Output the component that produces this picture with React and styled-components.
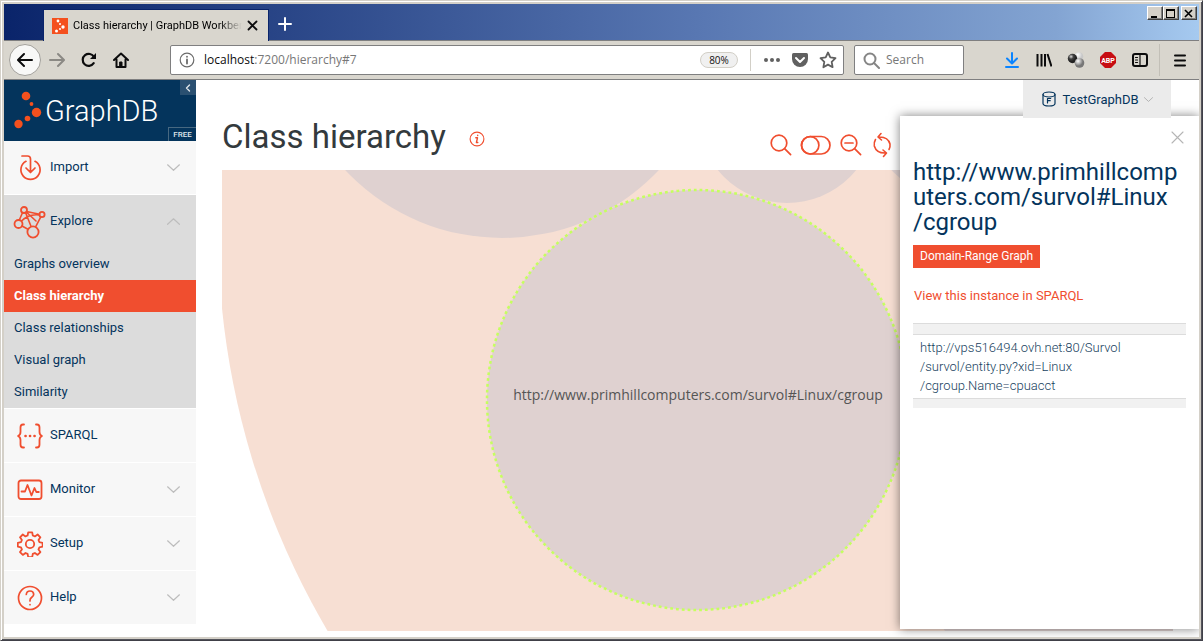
import React from "react";
import styled, { createGlobalStyle, css } from "styled-components";

const c = {
  orange: "#f04e2f",
  navy: "#04345c",
  chrome: "#d9d6ce",
  line: "#7f7f80",
  peach: "#f7dfd3",
  mauve: "#dfd1d0",
};
const ui = `Roboto, "Liberation Sans", sans-serif`;
const sys = `"Open Sans", "Noto Sans", sans-serif`;

const Global = createGlobalStyle`
  *, *::before, *::after { box-sizing: border-box; }
  body { margin: 0; background: ${c.chrome}; font-family: ${ui}; }
  button { font: inherit; color: inherit; background: none; border: 0; padding: 0; }
  a { color: inherit; text-decoration: none; }
  ul, h1, h2 { margin: 0; padding: 0; list-style: none; font-weight: 400; }
  svg { display: block; flex: none; }
`;

/* ---------- window frame ---------- */
const Window = styled.div`
  display: flex;
  flex-direction: column;
  min-height: 100vh;
  padding: 3px;
  background: #d4d0c8;
  border: 1px solid;
  border-color: #d4d0c8 #404048 #404048 #d4d0c8;
  box-shadow: inset 1px 1px #fff, inset -1px -1px #55555c;
`;
const TitleBar = styled.header`
  display: flex;
  height: 37px;
  padding-left: 39px;
  align-items: flex-end;
  border-bottom: 1px solid ${c.line};
  background: linear-gradient(90deg, #0a246a 0%, #5877b2 58%, #83a4d2 88%, #a6caf0 100%);
`;
const Tab = styled.div`
  display: flex;
  align-items: center;
  width: 226px;
  height: 32px;
  margin-bottom: -1px;
  padding: 0 10px 0 8px;
  gap: 5px;
  border: solid #0a246a;
  border-width: 1px 1px 0;
  background: ${c.chrome};
`;
const TabTitle = styled.span`
  flex: 1;
  overflow: hidden;
  white-space: nowrap;
  font: 11px/16px ${ui};
  mask-image: linear-gradient(90deg, #000 86%, transparent);
`;
const NewTab = styled.button`
  display: grid;
  place-items: center;
  width: 32px;
  height: 32px;
`;
const Caption = styled.div`
  display: flex;
  align-self: flex-start;
  margin: 2px 2px 0 auto;
`;
const CaptionButton = styled.button`
  display: grid;
  place-items: center;
  width: 16px;
  height: 14px;
  margin-left: ${p => (p.$apart ? 2 : 0)}px;
  background: #d4d0c8;
  border: 1px solid;
  border-color: #fff #404040 #404040 #fff;
  box-shadow: inset -1px -1px #808080;
`;
const Toolbar = styled.nav`
  display: flex;
  align-items: center;
  height: 39px;
  padding: 0 3px 0 5px;
  background: ${c.chrome};
  border-bottom: 1px solid ${c.line};
`;
const ToolButton = styled.button`
  display: grid;
  place-items: center;
  width: 32px;
  height: 32px;
  flex: none;
  ${p => p.$round && css`
    background: #f8f8f7;
    border: 1px solid #a3a19c;
    border-radius: 50%;
  `}
`;
const Field = styled.div`
  display: flex;
  align-items: center;
  height: 30px;
  background: #fff;
  border: 1px solid ${c.line};
  border-radius: 2px;
  font: 13px/18px ${sys};
  min-width: 0;
`;
const UrlField = styled(Field)`
  flex: 1;
  margin: 0 10px 0 33px;
  padding: 0 6px 0 8px;
  gap: 9px;
  color: #777;
`;
const UrlBox = styled.label`
  position: relative;
  flex: 1;
  min-width: 0;
  font-size: 12px;
  display: flex;
`;
const UrlText = styled.span`
  position: absolute;
  inset: 0;
  pointer-events: none;
  b { font-weight: 400; color: #0c0c0d; }
`;
const TextInput = styled.input`
  width: 100%;
  min-width: 0;
  padding: 0;
  border: 0;
  outline: 0;
  background: transparent;
  font: inherit;
  color: ${p => (p.$hidden ? "transparent" : "#222")};
  &::placeholder { color: #777; opacity: 1; }
`;
const Zoom = styled.button`
  width: 38px;
  height: 16px;
  border: 1px solid #d2cfc7;
  border-radius: 8px;
  background: #f0f0f0;
  color: #111;
  font-size: 10px;
  line-height: 14px;
`;
const FieldIcons = styled.div`
  display: flex;
  align-items: center;
  gap: 10px;
  padding-left: 12px;
  margin-left: 3px;
  border-left: 1px solid #d2cfc7;
  height: 22px;
`;
const SearchField = styled(Field)`
  width: 110px;
  flex: none;
  padding: 0 8px;
  gap: 6px;
  margin-right: 32px;
  font-size: 12px;
`;
const MenuDivider = styled.span`
  width: 1px;
  height: 32px;
  margin: 0 4px 0 3px;
  background: #c2bfb7;
`;

/* ---------- page ---------- */
const Page = styled.div`
  position: relative;
  flex: 1;
  display: flex;
  background: #fff;
  overflow: hidden;
`;
const Sidebar = styled.aside`
  width: 192px;
  flex: none;
  color: ${c.navy};
  font-size: 13px;
`;
const Brand = styled.div`
  position: relative;
  display: flex;
  align-items: center;
  height: 61px;
  padding-left: 10px;
  gap: 3px;
  background: ${c.navy};
  color: #fff;
`;
const Wordmark = styled.span`
  font: 300 29px/40px ${ui};
`;
const Collapse = styled.button`
  position: absolute;
  top: 0;
  right: 0;
  display: grid;
  place-items: center;
  width: 16px;
  height: 15px;
  background: #2a5071;
`;
const Edition = styled.span`
  position: absolute;
  right: 0;
  bottom: 0;
  width: 28px;
  border: solid #476881;
  border-width: 1px 0 0 1px;
  color: #dfe5ea;
  font-size: 8px;
  font-weight: 500;
  line-height: 13px;
  text-align: center;
`;
const Item = styled.li`
  background: ${p => (p.$open ? "#dcdcdc" : "#f7f7f7")};
  border-bottom: 1px solid #fff;
`;
const ItemLink = styled.a`
  display: flex;
  align-items: center;
  height: 53px;
  padding: 0 16px 0 8px;
  gap: 2px;
`;
const IconCell = styled.span`
  display: grid;
  place-items: center;
  width: 36px;
  height: 36px;
  flex: none;
`;
const ItemLabel = styled.span`
  flex: 1;
  line-height: 18px;
  padding-bottom: 2px;
`;
const SubLink = styled.a`
  display: block;
  padding: 0 10px;
  line-height: 32px;
  ${p => p.$active && css`
    background: ${c.orange};
    color: #fff;
    font-weight: 700;
  `}
`;
const Main = styled.main`
  flex: 1;
  min-width: 0;
  display: flex;
  flex-direction: column;
  padding: 30px 26px 6px;
`;
const Heading = styled.div`
  display: flex;
  align-items: center;
  height: 60px;
  padding-bottom: 6px;
`;
const Title = styled.h1`
  font-size: 33px;
  line-height: 40px;
  color: #333a3d;
  white-space: nowrap;
`;
const Info = styled.button`
  margin: 4px 0 0 23px;
`;
const Tools = styled.div`
  display: flex;
  flex: 0 0 404px;
  gap: 7px;
  align-items: center;
  margin: 16px 0 0 auto;
`;
const Chart = styled.svg`
  width: 100%;
  height: auto;
  min-height: 461px;
  flex: 1;
  background: #fff;
`;
const Repository = styled.button`
  position: absolute;
  top: 0;
  right: 28px;
  z-index: 2;
  display: flex;
  align-items: center;
  justify-content: center;
  gap: 5px;
  width: 148px;
  height: 38px;
  background: #ebebeb;
  color: ${c.navy};
  font-size: 13px;
`;
const Panel = styled.section`
  position: absolute;
  top: 36px;
  right: 0;
  bottom: 8px;
  width: 299px;
  padding: 44px 12px 0 13px;
  background: #fff;
  box-shadow: 0 0 10px rgba(0, 0, 0, 0.5);
  color: ${c.navy};
`;
const Close = styled.button`
  position: absolute;
  top: 15px;
  right: 15px;
`;
const PanelTitle = styled.h2`
  font-size: 24px;
  line-height: 25px;
  white-space: nowrap;
`;
const Primary = styled.button`
  display: block;
  height: 23px;
  margin-top: 10px;
  padding: 0 7px;
  background: ${c.orange};
  color: #fff;
  font-size: 12px;
  line-height: 23px;
`;
const QueryLink = styled.a`
  display: block;
  margin: 18px 0 0 1px;
  color: ${c.orange};
  font-size: 13px;
  line-height: 20px;
`;
const Instances = styled.ul`
  margin-top: 18px;
  border: solid #f1f1f1;
  border-width: 10px 0 9px;
  box-shadow: 0 -1px #dcdcdc;
  margin-right: 1px;
`;
const Instance = styled.li`
  padding: 3px 7px;
  border: solid #dcdcdc;
  border-width: 1px 0;
  font-size: 13px;
  font-weight: 300;
  line-height: 19px;
  color: #183f60;
`;

/* ---------- icons ---------- */
const Icon = ({ w = 16, h, box, color = "#0c0c0d", sw = 2, children, fill = "none" }) => (
  <svg width={w} height={h || w} viewBox={box || `0 0 ${w} ${h || w}`} fill={fill} stroke={color}
    strokeWidth={sw} strokeLinecap="round" strokeLinejoin="round" aria-hidden="true">{children}</svg>
);
const Chevron = ({ up, w = 13, color = "#bdbdbd" }) => (
  <Icon w={w} h={7} box="0 0 13 7" color={color} sw={1.2}><path d={up ? "M.6 6.3 6.5.8l5.9 5.5" : "M.6.8 6.5 6.3 12.4.8"} /></Icon>
);

const navIcons = {
  import: (
    <Icon w={26} color={c.orange} sw={1.7}>
      <path d="M5 1h5.500q3 0 3 3v13M9 13l4.500 4.500L18 13M9 6.300a9.600 9.600 0 1 0 9 0" />
    </Icon>
  ),
  explore: (
    <Icon w={34} color={c.orange} sw={1.8}>
      <circle cx="11" cy="5" r="3" /><circle cx="29" cy="9.500" r="2.600" /><circle cx="5.500" cy="19" r="4" /><circle cx="20" cy="27" r="5.600" />
      <path d="M9.500 7.700 6.300 15M13.600 6.500 26.500 9.300M8.500 16Q16 8.500 26.500 10M27.800 11.900 22.600 21.800M9 21l5.500 3M12.600 7.800l5.400 13.500M13.300 7l9.700 9" strokeWidth="1.600" />
    </Icon>
  ),
  sparql: (
    <Icon w={28} h={26} color={c.orange} sw={1.8}>
      <path d="M8 1.500H7Q4.500 1.500 4.500 4.500V9q0 3-2.500 4 2.500 1 2.500 4v4.500q0 3 2.500 3h1M20 1.500h1q2.500 0 2.500 3V9q0 3 2.500 4-2.500 1-2.500 4v4.500q0 3-2.500 3h-1" />
      <path d="M9.500 13h.1M14 13h.1M18.500 13h.1" strokeWidth="2.600" />
    </Icon>
  ),
  monitor: (
    <Icon w={26} h={22} color={c.orange} sw={1.8}>
      <rect x="1.500" y="1.500" width="23" height="18.500" rx="2.500" />
      <path d="M4.500 12.500H8L10.500 6l4 10.500 3-7.500 1.800 4h2.500" />
    </Icon>
  ),
  setup: (
    <Icon w={26} color={c.orange} sw={1.8}>
      <circle cx="13" cy="13" r="4.200" />
      <path d="M11 1.500h4l.6 3.200 2.100.9 2.700-1.900 2.800 2.800-1.900 2.700.9 2.100 3.200.7v3.800l-3.200.7-.9 2.100 1.900 2.700-2.800 2.800-2.700-1.900-2.100.9-.6 3.200h-4l-.6-3.200-2.100-.9-2.700 1.900-2.800-2.800 1.900-2.700-.9-2.100-3.200-.7V12l3.200-.7.9-2.100-1.900-2.700 2.800-2.800 2.700 1.900 2.100-.9Z" transform="translate(.2 -.2)" />
    </Icon>
  ),
  help: (
    <Icon w={26} color={c.orange} sw={1.7}>
      <circle cx="13" cy="13" r="11.500" />
      <path d="M9.300 9.500Q9.600 6 13 6t3.700 3.200q0 1.800-1.900 3.100T13 15.500v.5M13 19.500v.2" />
    </Icon>
  ),
};

const nav = [
  { id: "import", label: "Import", expandable: true },
  { id: "explore", label: "Explore", expandable: true, children: ["Graphs overview", "Class hierarchy", "Class relationships", "Visual graph", "Similarity"] },
  { id: "sparql", label: "SPARQL" },
  { id: "monitor", label: "Monitor", expandable: true },
  { id: "setup", label: "Setup", expandable: true },
  { id: "help", label: "Help", expandable: true },
];

function BrowserChrome() {
  return (
    <>
      <TitleBar>
        <Tab>
          <svg width="16" height="16" viewBox="0 0 16 16" fill="#fff" aria-hidden="true">
            <rect width="16" height="16" fill="#f4501e" />
            <circle cx="6" cy="3" r="1.400" /><circle cx="8" cy="6" r="1" /><circle cx="11" cy="9" r="1.700" /><circle cx="8" cy="11" r="1" /><circle cx="4.500" cy="13" r="1.500" />
          </svg>
          <TabTitle>Class hierarchy | GraphDB Workben</TabTitle>
          <button aria-label="Close tab"><Icon w={11} sw={1.8}><path d="m1.500 1.500 8 8m0-8-8 8" /></Icon></button>
        </Tab>
        <NewTab aria-label="New tab"><Icon w={14} color="#fff"><path d="M7 1v12M1 7h12" /></Icon></NewTab>
        <Caption>
          <CaptionButton aria-label="Minimize"><svg width="10" height="9"><path d="M1 7h6v2H1z" /></svg></CaptionButton>
          <CaptionButton aria-label="Maximize"><svg width="10" height="9"><path d="M0 0h9v9H0zM1 2v6h7V2z" fillRule="evenodd" /></svg></CaptionButton>
          <CaptionButton $apart aria-label="Close"><svg width="10" height="9" stroke="#000" strokeWidth="1.600"><path d="m1 1 7 7m0-7-7 7" /></svg></CaptionButton>
        </Caption>
      </TitleBar>
      <Toolbar>
        <ToolButton $round aria-label="Back"><Icon><path d="M15 8H1.500M7 2 1 8l6 6" /></Icon></ToolButton>
        <ToolButton aria-label="Forward"><Icon color="#8b8984"><path d="M1 8h13.500M9 2l6 6-6 6" /></Icon></ToolButton>
        <ToolButton aria-label="Reload"><Icon sw={2.2}><path d="M12.700 11.200A6 6 0 1 1 13 5" /><path d="M15 1v6H9z" fill="#0c0c0d" stroke="none" /></Icon></ToolButton>
        <ToolButton aria-label="Home"><Icon><path d="m1 8 7-6.500L15 8M3.500 7.500V15h9V7.500" /><path d="M7 10h2v5H7z" strokeWidth="1" fill="#0c0c0d" /></Icon></ToolButton>
        <UrlField>
          <Icon color="#6b6b6b" sw={1.2}><circle cx="8" cy="8" r="6.800" /><path d="M8 7.500v4M8 4.700v.1" strokeWidth="1.800" /></Icon>
          <UrlBox>
            <TextInput $hidden aria-label="Address" defaultValue="" />
            <UrlText><b>localhost</b>:7200/hierarchy#7</UrlText>
          </UrlBox>
          <Zoom>80%</Zoom>
          <FieldIcons>
            <Icon w={18} color="none"><g fill="#606060"><circle cx="3" cy="9" r="2" /><circle cx="9" cy="9" r="2" /><circle cx="15" cy="9" r="2" /></g></Icon>
            <Icon w={18} color="none"><path d="M2.500 2h13Q17 2 17 3.500V8a8 8 0 0 1-16 0V3.500Q1 2 2.500 2Z" fill="#606060" /><path d="m5 7 4 4 4-4" stroke="#fff" strokeWidth="2" /></Icon>
            <Icon w={18} color="#606060"><path d="m9 1.500 2.300 4.900 5.200.7-3.800 3.700.9 5.400L9 13.600l-4.600 2.600.9-5.400L1.500 7.100l5.200-.7Z" strokeWidth="1.800" /></Icon>
          </FieldIcons>
        </UrlField>
        <SearchField>
          <Icon w={17} color="#858585"><circle cx="7" cy="7" r="5.500" /><path d="m11 11 5 5" /></Icon>
          <TextInput aria-label="Search" placeholder="Search" />
        </SearchField>
        <ToolButton aria-label="Downloads"><Icon color="#0a84ff"><path d="M8 1v10M3 6.500l5 5 5-5M2 15h12" /></Icon></ToolButton>
        <ToolButton aria-label="Library"><Icon sw={2}><path d="M1.500 2v12.500M5.500 2v12.500M9 2v12.500M11.500 2l4 12.500" strokeLinecap="butt" /></Icon></ToolButton>
        <ToolButton aria-label="Extension">
          <svg width="18" height="16" aria-hidden="true">
            <defs>
              <radialGradient id="dark" cx=".35" cy=".3"><stop stopColor="#ddd" /><stop offset=".5" stopColor="#444" /><stop offset="1" stopColor="#222" /></radialGradient>
              <radialGradient id="mid" cx=".35" cy=".3"><stop stopColor="#fff" /><stop offset="1" stopColor="#777" /></radialGradient>
              <radialGradient id="light" cx=".35" cy=".3"><stop stopColor="#fff" /><stop offset="1" stopColor="#c8c8c8" /></radialGradient>
            </defs>
            <circle cx="12" cy="4.500" r="4.300" fill="url(#light)" /><circle cx="5.500" cy="6.500" r="4.700" fill="url(#dark)" /><circle cx="12.500" cy="11" r="4.800" fill="url(#mid)" />
          </svg>
        </ToolButton>
        <ToolButton aria-label="Adblock Plus">
          <svg width="16" height="16" aria-hidden="true">
            <path d="M5 0h6l5 5v6l-5 5H5l-5-5V5z" fill="#c70d12" />
            <text x="8" y="11" textAnchor="middle" fontFamily={ui} fontWeight="700" fontSize="7" fill="#fff">ABP</text>
          </svg>
        </ToolButton>
        <ToolButton aria-label="Sidebars"><Icon sw={2}><rect x="1" y="2" width="14" height="12" rx="2" /><path d="M8 2v12M3.500 5.500h2M3.500 8h2M3.500 10.500h2" strokeWidth="1.200" /></Icon></ToolButton>
        <MenuDivider />
        <ToolButton aria-label="Menu"><Icon w={14}><path d="M2 2.500h10M2 7.500h10M2 12.500h10" /></Icon></ToolButton>
      </Toolbar>
    </>
  );
}

function Navigation() {
  return (
    <Sidebar>
      <Brand>
        <svg width="28" height="40" viewBox="0 0 28 40" fill="#f4501e" aria-hidden="true">
          <circle cx="12" cy="5" r="4.300" /><circle cx="17.500" cy="13" r="1.900" /><circle cx="22.500" cy="21.500" r="4.700" /><circle cx="13.500" cy="27.500" r="2.800" /><circle cx="4.500" cy="33" r="4.200" />
        </svg>
        <Wordmark>GraphDB</Wordmark>
        <Collapse aria-label="Collapse menu"><Icon w={6} h={8} color="#dfe5ea" sw={1.4}><path d="M4.500 1 1.500 4l3 3" /></Icon></Collapse>
        <Edition>FREE</Edition>
      </Brand>
      <ul>
        {nav.map(n => (
          <Item key={n.id} $open={!!n.children}>
            <ItemLink href="#">
              <IconCell>{navIcons[n.id]}</IconCell>
              <ItemLabel>{n.label}</ItemLabel>
              {n.expandable && <Chevron up={!!n.children} />}
            </ItemLink>
            {n.children && (
              <ul>
                {n.children.map(s => <li key={s}><SubLink href="#" $active={s === "Class hierarchy"}>{s}</SubLink></li>)}
              </ul>
            )}
          </Item>
        ))}
      </ul>
    </Sidebar>
  );
}

function Hierarchy() {
  return (
    <Chart role="img" aria-label="Class hierarchy diagram">
      <circle cx="788" cy="59" r="792" fill={c.peach} />
      <g fill={c.mauve}>
        <circle cx="280" cy="-147" r="215" />
        <circle cx="565" cy="-56" r="89" />
        <circle cx="766" cy="-90" r="132" />
        <circle cx="888" cy="348" r="200" />
        <circle cx="475" cy="230" r="210" stroke="#c5ff5f" strokeWidth="2.500" strokeDasharray="2.800 3" />
      </g>
      <text x="476" y="230" textAnchor="middle" fontFamily={sys} fontSize="14" fill="#555">
        http://www.primhillcomputers.com/survol#Linux/cgroup
      </text>
    </Chart>
  );
}

function Details() {
  return (
    <Panel>
      <Close aria-label="Close panel"><Icon w={13} color="#b5b5b5" sw={1.1}><path d="m1 1 11 11m0-11L1 12" /></Icon></Close>
      <PanelTitle>http://www.primhillcomp<br />uters.com/survol#Linux<br />/cgroup</PanelTitle>
      <Primary>Domain-Range Graph</Primary>
      <QueryLink href="#">View this instance in SPARQL</QueryLink>
      <Instances>
        <Instance><a href="#">http://vps516494.ovh.net:80/Survol<br />/survol/entity.py?xid=Linux<br />/cgroup.Name=cpuacct</a></Instance>
      </Instances>
    </Panel>
  );
}

export default function App() {
  return (
    <Window>
      <Global />
      <BrowserChrome />
      <Page>
        <Navigation />
        <Main>
          <Heading>
            <Title>Class hierarchy</Title>
            <Info aria-label="About this view">
              <Icon w={16} color={c.orange} sw={1.1}><circle cx="8" cy="8" r="6.900" /><path d="M6.800 6.800h1.700L7.400 11.500h1.400M8.700 4.300v.2" strokeWidth="1.400" /></Icon>
            </Info>
            <Tools>
              <button aria-label="Search"><Icon w={24} color={c.orange} sw={1.7}><circle cx="10" cy="10" r="7.800" /><path d="m15.600 15.600 6 6" /></Icon></button>
              <button aria-label="Toggle prefixes"><Icon w={32} h={24} color={c.orange} sw={1.7}><rect x="1.500" y="3.500" width="28.500" height="17.500" rx="8.700" /><circle cx="10.200" cy="12.300" r="8.700" /></Icon></button>
              <button aria-label="Zoom out"><Icon w={24} color={c.orange} sw={1.7}><circle cx="10" cy="10" r="7.800" /><path d="m15.600 15.600 6 6M6 10h8" /></Icon></button>
              <button aria-label="Reload diagram"><Icon w={24} h={26} color={c.orange} sw={1.6}><path d="M11 1.500 8 5l3.500 3M8.500 5q9.500-.5 11.500 7 .4 3-1 5.500M13.500 24.500l3-3.500-3.500-3M16 21q-9.500.5-11.700-7-.6-3.500 1.200-6.500" /></Icon></button>
            </Tools>
          </Heading>
          <Hierarchy />
        </Main>
        <Repository>
          <Icon w={16} color={c.navy} sw={1.2}><ellipse cx="8" cy="3.500" rx="6" ry="2.500" /><path d="M2 3.500v9q0 2.500 6 2.500t6-2.500v-9M6.500 12V7.500h3.200M6.500 9.700h2.700" /></Icon>
          <span>TestGraphDB</span>
          <Chevron w={9} color="#a9a9a9" />
        </Repository>
        <Details />
      </Page>
    </Window>
  );
}
